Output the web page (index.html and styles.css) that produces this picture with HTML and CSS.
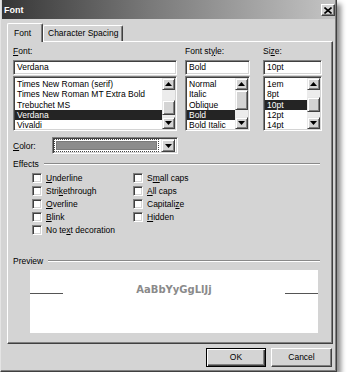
FILE: index.html
```html
<!DOCTYPE html>
<html lang="en">

<head>
    <meta charset="UTF-8">
    <title>Font</title>
    <link rel="stylesheet" href="styles.css">
</head>

<body>
    <div class="window">
        <div class="titlebar">
            <span class="title">Font</span>
            <span class="close-btn">
                <svg width="8" height="7" viewBox="0 0 8 7"><path d="M0.5 0.5 L7.5 6.5 M7.5 0.5 L0.5 6.5" stroke="#000" stroke-width="1.6"/></svg>
            </span>
        </div>

        <div class="main">
            <div class="tabs">
                <div class="tab tab-active">Font</div>
                <div class="tab tab-spacing">Character Spacing</div>
            </div>

            <div class="panel">
                <!-- font / style / size pickers -->
                <div class="pickers">
                    <div class="picker picker-font">
                        <div class="label"><u>F</u>ont:</div>
                        <div class="field">Verdana</div>
                        <div class="list">
                            <div class="items">
                                <div class="item">Times New Roman (serif)</div>
                                <div class="item">Times New Roman MT Extra Bold</div>
                                <div class="item">Trebuchet MS</div>
                                <div class="item selected">Verdana</div>
                                <div class="item">Vivaldi</div>
                            </div>
                            <div class="sbar">
                                <div class="sbtn"><svg width="7" height="4" viewBox="0 0 7 4"><polygon points="3.5,0 7,4 0,4" fill="#000"/></svg></div>
                                <div class="track"><div class="thumb thumb-font"></div></div>
                                <div class="sbtn"><svg width="7" height="4" viewBox="0 0 7 4"><polygon points="0,0 7,0 3.5,4" fill="#000"/></svg></div>
                            </div>
                        </div>
                    </div>

                    <div class="picker picker-style">
                        <div class="label">Font st<u>y</u>le:</div>
                        <div class="field">Bold</div>
                        <div class="list">
                            <div class="items">
                                <div class="item">Normal</div>
                                <div class="item">Italic</div>
                                <div class="item">Oblique</div>
                                <div class="item selected">Bold</div>
                                <div class="item">Bold Italic</div>
                            </div>
                            <div class="sbar">
                                <div class="sbtn"><svg width="7" height="4" viewBox="0 0 7 4"><polygon points="3.5,0 7,4 0,4" fill="#000"/></svg></div>
                                <div class="track"><div class="thumb thumb-style"></div></div>
                                <div class="sbtn"><svg width="7" height="4" viewBox="0 0 7 4"><polygon points="0,0 7,0 3.5,4" fill="#000"/></svg></div>
                            </div>
                        </div>
                    </div>

                    <div class="picker picker-size">
                        <div class="label">Si<u>z</u>e:</div>
                        <div class="field">10pt</div>
                        <div class="list">
                            <div class="items">
                                <div class="item">1em</div>
                                <div class="item">8pt</div>
                                <div class="item selected">10pt</div>
                                <div class="item">12pt</div>
                                <div class="item">14pt</div>
                            </div>
                            <div class="sbar">
                                <div class="sbtn"><svg width="7" height="4" viewBox="0 0 7 4"><polygon points="3.5,0 7,4 0,4" fill="#000"/></svg></div>
                                <div class="track"><div class="thumb thumb-size"></div></div>
                                <div class="sbtn"><svg width="7" height="4" viewBox="0 0 7 4"><polygon points="0,0 7,0 3.5,4" fill="#000"/></svg></div>
                            </div>
                        </div>
                    </div>
                </div>

                <!-- color -->
                <div class="color-row">
                    <div class="color-label"><u>C</u>olor:</div>
                    <div class="combo">
                        <div class="swatch-wrap"><div class="swatch"></div></div>
                        <div class="combo-btn"><svg width="7" height="4" viewBox="0 0 7 4"><polygon points="0,0 7,0 3.5,4" fill="#000"/></svg></div>
                    </div>
                </div>

                <!-- effects -->
                <div class="group-head">
                    <span>Effects</span>
                    <span class="rule"></span>
                </div>
                <div class="effects">
                    <div class="effects-col">
                        <div class="check"><span class="box"></span><span><u>U</u>nderline</span></div>
                        <div class="check"><span class="box"></span><span>Stri<u>k</u>ethrough</span></div>
                        <div class="check"><span class="box"></span><span><u>O</u>verline</span></div>
                        <div class="check"><span class="box"></span><span><u>B</u>link</span></div>
                        <div class="check"><span class="box"></span><span>No te<u>x</u>t decoration</span></div>
                    </div>
                    <div class="effects-col">
                        <div class="check"><span class="box"></span><span>S<u>m</u>all caps</span></div>
                        <div class="check"><span class="box"></span><span><u>A</u>ll caps</span></div>
                        <div class="check"><span class="box"></span><span>Capitali<u>z</u>e</span></div>
                        <div class="check"><span class="box"></span><span><u>H</u>idden</span></div>
                    </div>
                </div>

                <!-- preview -->
                <div class="group-head preview-head">
                    <span>Preview</span>
                    <span class="rule"></span>
                </div>
                <div class="preview">
                    <span class="base-line"></span>
                    <span class="sample">AaBbYyGgLlJj</span>
                    <span class="base-line"></span>
                </div>
            </div>

            <div class="buttons">
                <div class="button button-default">OK</div>
                <div class="button">Cancel</div>
            </div>
        </div>
    </div>
</body>

</html>
```

FILE: styles.css
```css
* {
    box-sizing: border-box;
}

body {
    margin: 0;
    background: #fff;
    font-family: "Liberation Sans", Arial, sans-serif;
    font-size: 8.5px;
    color: #000;
}

u {
    text-decoration-thickness: 1px;
    text-underline-offset: 1px;
}

/* Window frame */
.window {
    width: 337px;
    height: 372px;
    padding: 0 1px 1px 1px;
    background: #d4d4d4;
    border-left: 1px solid #e4e4e4;
    border-right: 1px solid #404040;
    border-bottom: 1px solid #404040;
    box-shadow: inset -1px -1px 0 #808080, 4px 4px 5px rgba(0, 0, 0, 0.45);
}

.titlebar {
    height: 19px;
    display: flex;
    align-items: center;
    justify-content: space-between;
    padding: 0 0 0 2px;
    background: linear-gradient(to right, #363636, #7a7a7a 45%, #c4c4c4);
}

.title {
    color: #fff;
    font-weight: bold;
    font-size: 9px;
}

.close-btn {
    width: 14px;
    height: 12px;
    margin-top: 1px;
    display: flex;
    align-items: center;
    justify-content: center;
    background: #d4d4d4;
    border: 1px solid;
    border-color: #fff #404040 #404040 #fff;
    box-shadow: inset -1px -1px 0 #808080;
}

.main {
    padding: 4px 2px 0 5px;
}

/* Tabs */
.tabs {
    height: 18px;
    display: flex;
    align-items: flex-end;
}

.tab {
    height: 16px;
    padding-left: 4px;
    line-height: 15px;
    border: 1px solid;
    border-bottom: none;
    border-color: #fff #404040 #fff #fff;
    border-radius: 2px 2px 0 0;
    box-shadow: inset -1px 0 0 #808080;
    background: #d4d4d4;
}

.tab-active {
    position: relative;
    z-index: 1;
    width: 36px;
    height: 19px;
    margin-bottom: -1px;
    padding-left: 6px;
    line-height: 18px;
}

.tab-spacing {
    width: 80px;
}

/* Tab panel */
.panel {
    height: 303px;
    padding: 4px 10px 0 5px;
    border: 1px solid;
    border-color: #fff #404040 #404040 #fff;
    box-shadow: inset -1px -1px 0 #808080;
}

.pickers {
    display: flex;
}

.picker-font {
    width: 164px;
}

.picker-style {
    width: 65px;
    margin-left: 8px;
}

.picker-size {
    width: 59px;
    margin-left: 13px;
}

.label {
    height: 11px;
    line-height: 11px;
    margin-bottom: 3px;
}

.field,
.list,
.combo {
    background: #fff;
    border: 1px solid;
    border-color: #808080 #fff #fff #808080;
    box-shadow: inset 1px 1px 0 #404040, inset -1px -1px 0 #d4d4d4;
}

.field {
    height: 15px;
    padding-left: 3px;
    line-height: 13px;
}

.list {
    height: 55px;
    margin-top: 1px;
    padding: 1px;
    display: flex;
}

.items {
    flex: 1;
    padding-top: 1px;
    overflow: hidden;
}

.item {
    height: 10.25px;
    line-height: 10.25px;
    padding-left: 2px;
    white-space: nowrap;
}

.item.selected {
    background: #242424;
    color: #fff;
}

/* Scrollbar */
.sbar {
    width: 13px;
    display: flex;
    flex-direction: column;
}

.sbtn {
    height: 12px;
    display: flex;
    align-items: center;
    justify-content: center;
    background: #d4d4d4;
    border: 1px solid;
    border-color: #e8e8e8 #404040 #404040 #e8e8e8;
    box-shadow: inset 1px 1px 0 #fff, inset -1px -1px 0 #808080;
}

.track {
    flex: 1;
    background: #ececec;
}

.thumb {
    background: #d4d4d4;
    border: 1px solid;
    border-color: #e8e8e8 #404040 #404040 #e8e8e8;
    box-shadow: inset 1px 1px 0 #fff, inset -1px -1px 0 #808080;
}

.thumb-font {
    margin-top: 10px;
    height: 15px;
}

.thumb-style {
    height: 20px;
}

.thumb-size {
    margin-top: 7px;
    height: 15px;
}

/* Color */
.color-row {
    margin-top: 6px;
    display: flex;
    align-items: center;
}

.color-label {
    width: 39px;
}

.combo {
    width: 126px;
    height: 17px;
    padding: 1px 2px 1px 1px;
    display: flex;
}

.swatch-wrap {
    flex: 1;
    padding: 1px;
    margin-right: 2px;
    border: 1px dotted #444;
}

.swatch {
    height: 100%;
    background: #8c8c8c;
    border: 1px solid #7a7a7a;
}

.combo-btn {
    width: 14px;
    display: flex;
    align-items: center;
    justify-content: center;
    background: #d4d4d4;
    border: 1px solid;
    border-color: #e8e8e8 #404040 #404040 #e8e8e8;
    box-shadow: inset 1px 1px 0 #fff, inset -1px -1px 0 #808080;
}

/* Group headings */
.group-head {
    margin-top: 4px;
    height: 11px;
    display: flex;
    align-items: center;
    margin-right: 2px;
}

.rule {
    flex: 1;
    height: 2px;
    margin-left: 5px;
    border-top: 1px solid #8a8a8a;
    border-bottom: 1px solid #fff;
}

.effects {
    margin-top: 2px;
    padding-left: 19px;
    display: flex;
}

.effects-col {
    width: 101px;
}

.check {
    height: 13px;
    display: flex;
    align-items: center;
}

.box {
    width: 10px;
    height: 10px;
    margin-right: 4px;
    background: #fff;
    border: 1px solid;
    border-color: #808080 #fff #fff #808080;
    box-shadow: inset 1px 1px 0 #404040, inset -1px -1px 0 #d4d4d4;
}

.preview-head {
    margin-top: 19px;
}

.preview {
    height: 63px;
    margin: 4px 4px 0 17px;
    padding-top: 14px;
    display: flex;
    align-items: flex-start;
    justify-content: space-between;
    background: #fff;
}

.base-line {
    width: 33px;
    height: 1px;
    margin-top: 9px;
    background: #555;
}

.sample {
    font-family: "DejaVu Sans", Verdana, sans-serif;
    font-size: 10px;
    font-weight: bold;
    line-height: 12px;
    color: #8a8a8a;
}

/* Buttons */
.buttons {
    margin-top: 4px;
    padding-right: 1px;
    display: flex;
    justify-content: flex-end;
    gap: 5px;
}

.button {
    width: 61px;
    height: 19px;
    line-height: 16px;
    text-align: center;
    background: #d4d4d4;
    border: 1px solid;
    border-color: #fff #404040 #404040 #fff;
    box-shadow: inset -1px -1px 0 #808080;
}

.button-default {
    width: 60px;
    border: 1px solid #000;
    box-shadow: inset 1px 1px 0 #fff, inset -1px -1px 0 #404040, inset -2px -2px 0 #808080;
}
```
